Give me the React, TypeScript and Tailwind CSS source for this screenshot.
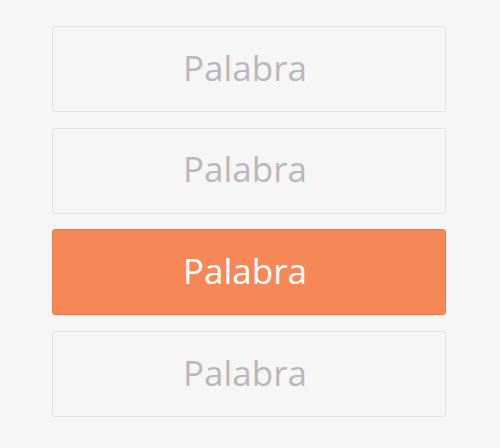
import React from "react";

export default function App() {
  const items = [false, false, true, false];
  return (
    <div className="w-[500px] h-[448px] bg-[#f6f6f6] pt-[26px]" style={{ fontFamily: '"Open Sans", sans-serif' }}>
      <div className="flex flex-col gap-[15.6px] ml-[52px] w-[394px]">
        {items.map((active, i) => (
          <div
            key={i}
            className={
              active
                ? "h-[86px] rounded-[3px] border border-[#e97a4c] bg-[#f68857] text-white flex items-center justify-center pr-[8px] pb-[2px] text-[35px]"
                : "h-[86px] rounded-[3px] border border-[#e2e2e2] bg-[#f6f6f6] text-[#b9b9b9] flex items-center justify-center pr-[8px] pb-[2px] text-[35px]"
            }
          >
            Palabra
          </div>
        ))}
      </div>
    </div>
  );
}
